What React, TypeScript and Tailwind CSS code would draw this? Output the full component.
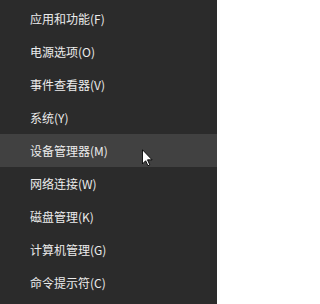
const items = [
    '应用和功能(F)',
    '电源选项(O)',
    '事件查看器(V)',
    '系统(Y)',
    '设备管理器(M)',
    '网络连接(W)',
    '磁盘管理(K)',
    '计算机管理(G)',
    '命令提示符(C)',
];

export default function App() {
    return (
        <div className="w-[217px] h-[304px] bg-[#2b2b2b] pt-[2px] overflow-hidden">
            {items.map((label, i) => (
                <div
                    key={label}
                    className={`relative flex h-[33px] items-center pl-[30px] text-[12px] text-[#ececec] ${
                        i === 4 ? 'bg-[#414141]' : ''
                    }`}
                    style={{ fontFamily: '"Segoe UI", "Noto Sans CJK SC", sans-serif' }}
                >
                    {label}
                    {i === 4 && (
                        // curseur de la souris
                        <svg
                            className="absolute left-[142px] top-[15px]"
                            width="11"
                            height="18"
                            viewBox="0 0 12 19"
                        >
                            <path
                                d="M0.5 0.5 L0.5 16 L4 12.5 L6.5 18 L8.5 17 L6 11.5 L11 11.5 Z"
                                fill="#ffffff"
                                stroke="#000000"
                                strokeWidth="1"
                            />
                        </svg>
                    )}
                </div>
            ))}
        </div>
    );
}
